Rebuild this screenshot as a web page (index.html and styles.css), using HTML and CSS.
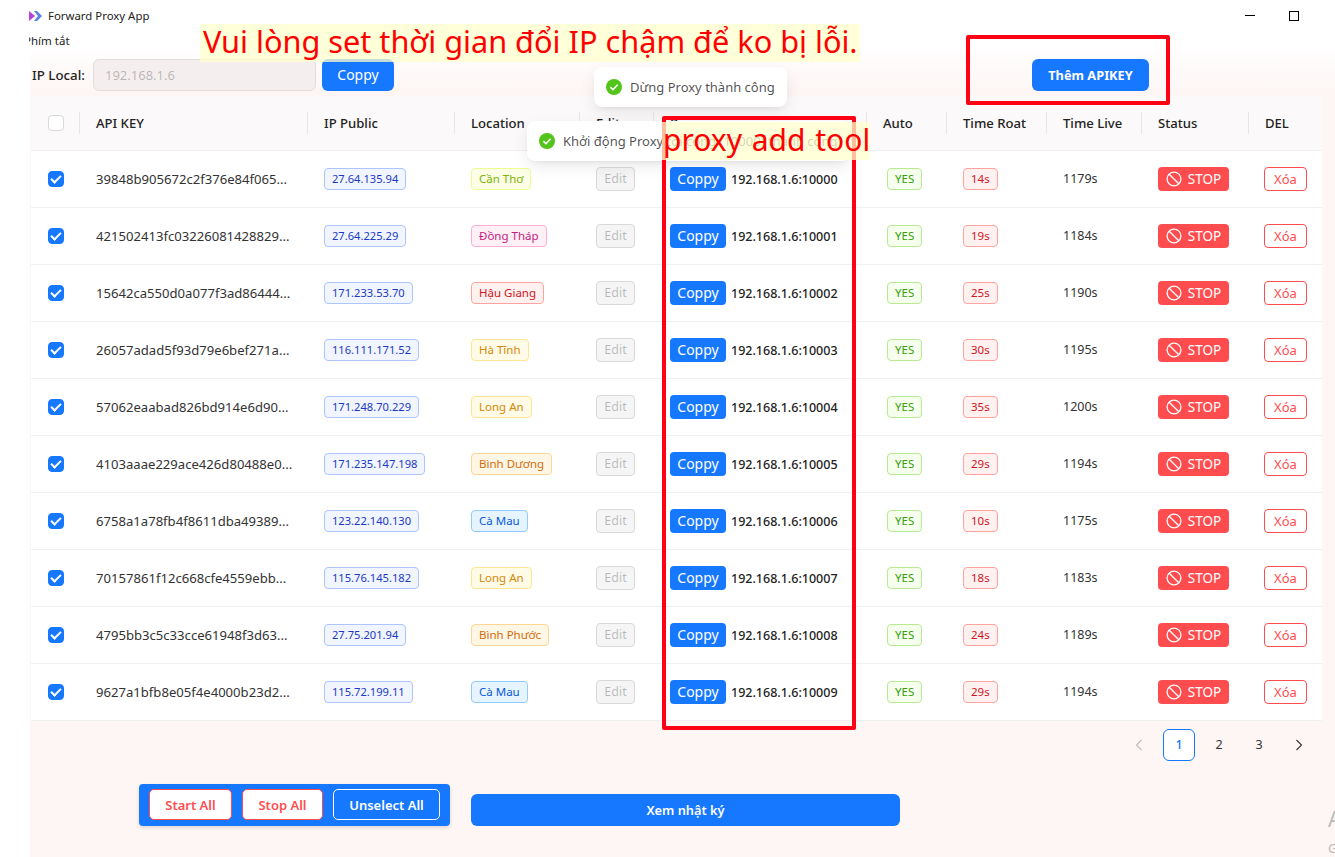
FILE: index.html
```html
<!DOCTYPE html>
<html lang="vi">
<head>
<meta charset="utf-8">
<title>Forward Proxy App</title>
<link rel="stylesheet" href="styles.css">
</head>
<body>
<svg class="defs" width="0" height="0" aria-hidden="true">
  <defs>
    <symbol id="stop" viewBox="0 0 16 16"><circle cx="8" cy="8" r="6.9" fill="none" stroke="currentColor" stroke-width="1.3"/><path d="M3.2 3.2l9.6 9.6" stroke="currentColor" stroke-width="1.3"/></symbol>
    <symbol id="ok" viewBox="0 0 16 16"><circle cx="8" cy="8" r="8" fill="#52c41a"/><path d="M4.4 8.2l2.6 2.5 4.6-5" fill="none" stroke="#fff" stroke-width="1.6"/></symbol>
  </defs>
</svg>
<header class="titlebar">
  <div class="title-row">
    <svg class="logo" width="14" height="10" viewBox="0 0 14 10"><path d="M0 0l6 5-6 5z" fill="#b63fe0"/><path d="M5 0l3 0 5 5-5 5-3 0 4-5z" fill="#5b7fe8"/></svg>
    <span class="app-name">Forward Proxy App</span>
    <div class="win-controls">
      <span class="win-min"></span>
      <span class="win-max"></span>
    </div>
  </div>
  <div class="menu-row"><span class="menu-item">Phím tắt</span></div>
</header>
<main class="main">
  <div class="toolbar">
    <label class="ip-label">IP Local:</label>
    <input class="ip-input" value="192.168.1.6" disabled>
    <button class="btn btn-primary btn-lg">Coppy</button>
    <button class="btn btn-primary btn-lg btn-add">Thêm APIKEY</button>
  </div>
  <table class="grid">
    <colgroup>
      <col class="c-check"><col class="c-key"><col class="c-ip"><col class="c-loc"><col class="c-edit"><col class="c-proxy"><col class="c-auto"><col class="c-roat"><col class="c-live"><col class="c-status"><col class="c-del">
    </colgroup>
    <thead>
      <tr><th class="cell-check"><span class="cb"></span></th><th>API KEY</th><th>IP Public</th><th>Location</th><th>Edit</th><th>Proxy</th><th>Auto</th><th>Time Roat</th><th>Time Live</th><th>Status</th><th class="last">DEL</th></tr>
    </thead>
    <tbody>
      <tr><td class="cell-check"><span class="cb on"></span></td><td class="key"><span>39848b905672c2f376e84f065...</span></td><td><span class="tag geek">27.64.135.94</span></td><td><span class="tag lime">Cần Thơ</span></td><td><button class="btn btn-edit">Edit</button></td><td class="proxy"><button class="btn btn-primary btn-copy">Coppy</button><b>192.168.1.6:10000</b></td><td><span class="tag green">YES</span></td><td><span class="tag red">14s</span></td><td>1179s</td><td><button class="btn btn-stop"><svg width="16" height="16"><use href="#stop"/></svg>STOP</button></td><td><button class="btn btn-del">Xóa</button></td></tr>
      <tr><td class="cell-check"><span class="cb on"></span></td><td class="key"><span>421502413fc03226081428829...</span></td><td><span class="tag geek">27.64.225.29</span></td><td><span class="tag magenta">Đồng Tháp</span></td><td><button class="btn btn-edit">Edit</button></td><td class="proxy"><button class="btn btn-primary btn-copy">Coppy</button><b>192.168.1.6:10001</b></td><td><span class="tag green">YES</span></td><td><span class="tag red">19s</span></td><td>1184s</td><td><button class="btn btn-stop"><svg width="16" height="16"><use href="#stop"/></svg>STOP</button></td><td><button class="btn btn-del">Xóa</button></td></tr>
      <tr><td class="cell-check"><span class="cb on"></span></td><td class="key"><span>15642ca550d0a077f3ad86444...</span></td><td><span class="tag geek">171.233.53.70</span></td><td><span class="tag red">Hậu Giang</span></td><td><button class="btn btn-edit">Edit</button></td><td class="proxy"><button class="btn btn-primary btn-copy">Coppy</button><b>192.168.1.6:10002</b></td><td><span class="tag green">YES</span></td><td><span class="tag red">25s</span></td><td>1190s</td><td><button class="btn btn-stop"><svg width="16" height="16"><use href="#stop"/></svg>STOP</button></td><td><button class="btn btn-del">Xóa</button></td></tr>
      <tr><td class="cell-check"><span class="cb on"></span></td><td class="key"><span>26057adad5f93d79e6bef271a...</span></td><td><span class="tag geek">116.111.171.52</span></td><td><span class="tag gold">Hà Tĩnh</span></td><td><button class="btn btn-edit">Edit</button></td><td class="proxy"><button class="btn btn-primary btn-copy">Coppy</button><b>192.168.1.6:10003</b></td><td><span class="tag green">YES</span></td><td><span class="tag red">30s</span></td><td>1195s</td><td><button class="btn btn-stop"><svg width="16" height="16"><use href="#stop"/></svg>STOP</button></td><td><button class="btn btn-del">Xóa</button></td></tr>
      <tr><td class="cell-check"><span class="cb on"></span></td><td class="key"><span>57062eaabad826bd914e6d90...</span></td><td><span class="tag geek">171.248.70.229</span></td><td><span class="tag gold">Long An</span></td><td><button class="btn btn-edit">Edit</button></td><td class="proxy"><button class="btn btn-primary btn-copy">Coppy</button><b>192.168.1.6:10004</b></td><td><span class="tag green">YES</span></td><td><span class="tag red">35s</span></td><td>1200s</td><td><button class="btn btn-stop"><svg width="16" height="16"><use href="#stop"/></svg>STOP</button></td><td><button class="btn btn-del">Xóa</button></td></tr>
      <tr><td class="cell-check"><span class="cb on"></span></td><td class="key"><span>4103aaae229ace426d80488e0...</span></td><td><span class="tag geek">171.235.147.198</span></td><td><span class="tag orange">Bình Dương</span></td><td><button class="btn btn-edit">Edit</button></td><td class="proxy"><button class="btn btn-primary btn-copy">Coppy</button><b>192.168.1.6:10005</b></td><td><span class="tag green">YES</span></td><td><span class="tag red">29s</span></td><td>1194s</td><td><button class="btn btn-stop"><svg width="16" height="16"><use href="#stop"/></svg>STOP</button></td><td><button class="btn btn-del">Xóa</button></td></tr>
      <tr><td class="cell-check"><span class="cb on"></span></td><td class="key"><span>6758a1a78fb4f8611dba49389...</span></td><td><span class="tag geek">123.22.140.130</span></td><td><span class="tag blue">Cà Mau</span></td><td><button class="btn btn-edit">Edit</button></td><td class="proxy"><button class="btn btn-primary btn-copy">Coppy</button><b>192.168.1.6:10006</b></td><td><span class="tag green">YES</span></td><td><span class="tag red">10s</span></td><td>1175s</td><td><button class="btn btn-stop"><svg width="16" height="16"><use href="#stop"/></svg>STOP</button></td><td><button class="btn btn-del">Xóa</button></td></tr>
      <tr><td class="cell-check"><span class="cb on"></span></td><td class="key"><span>70157861f12c668cfe4559ebb...</span></td><td><span class="tag geek">115.76.145.182</span></td><td><span class="tag gold">Long An</span></td><td><button class="btn btn-edit">Edit</button></td><td class="proxy"><button class="btn btn-primary btn-copy">Coppy</button><b>192.168.1.6:10007</b></td><td><span class="tag green">YES</span></td><td><span class="tag red">18s</span></td><td>1183s</td><td><button class="btn btn-stop"><svg width="16" height="16"><use href="#stop"/></svg>STOP</button></td><td><button class="btn btn-del">Xóa</button></td></tr>
      <tr><td class="cell-check"><span class="cb on"></span></td><td class="key"><span>4795bb3c5c33cce61948f3d63...</span></td><td><span class="tag geek">27.75.201.94</span></td><td><span class="tag orange">Bình Phước</span></td><td><button class="btn btn-edit">Edit</button></td><td class="proxy"><button class="btn btn-primary btn-copy">Coppy</button><b>192.168.1.6:10008</b></td><td><span class="tag green">YES</span></td><td><span class="tag red">24s</span></td><td>1189s</td><td><button class="btn btn-stop"><svg width="16" height="16"><use href="#stop"/></svg>STOP</button></td><td><button class="btn btn-del">Xóa</button></td></tr>
      <tr><td class="cell-check"><span class="cb on"></span></td><td class="key"><span>9627a1bfb8e05f4e4000b23d2...</span></td><td><span class="tag geek">115.72.199.11</span></td><td><span class="tag blue">Cà Mau</span></td><td><button class="btn btn-edit">Edit</button></td><td class="proxy"><button class="btn btn-primary btn-copy">Coppy</button><b>192.168.1.6:10009</b></td><td><span class="tag green">YES</span></td><td><span class="tag red">29s</span></td><td>1194s</td><td><button class="btn btn-stop"><svg width="16" height="16"><use href="#stop"/></svg>STOP</button></td><td><button class="btn btn-del">Xóa</button></td></tr>
    </tbody>
  </table>
  <nav class="pager">
    <span class="page muted"><svg width="10" height="12" viewBox="0 0 10 12"><path d="M7.5 1L2.5 6l5 5" fill="none" stroke="currentColor" stroke-width="1.1"/></svg></span>
    <span class="page current">1</span>
    <span class="page">2</span>
    <span class="page">3</span>
    <span class="page"><svg width="10" height="12" viewBox="0 0 10 12"><path d="M2.5 1l5 5-5 5" fill="none" stroke="currentColor" stroke-width="1.1"/></svg></span>
  </nav>
  <div class="actions">
    <div class="bulk">
      <button class="btn btn-bulk btn-start">Start All</button>
      <button class="btn btn-bulk btn-stopall">Stop All</button>
      <button class="btn btn-bulk btn-unselect">Unselect All</button>
    </div>
    <button class="btn btn-primary btn-log">Xem nhật ký</button>
  </div>
</main>

<div class="toast toast-stop"><svg width="16" height="16"><use href="#ok"/></svg>Dừng Proxy thành công</div>
<div class="toast toast-start"><svg width="16" height="16"><use href="#ok"/></svg>Khởi động Proxy tới cổng (10000) thành công</div>
<div class="frame frame-proxy"></div>
<div class="frame frame-add"></div>
<div class="note note-top">Vui lòng set thời gian đổi IP chậm để ko bị lỗi.</div>
<div class="note note-proxy">proxy add tool</div>
<div class="watermark">A<br><small>G</small></div>
</body>
</html>
```
FILE: styles.css
```css
* { box-sizing: border-box; }
html, body { margin: 0; padding: 0; }
body {
  position: relative;
  width: 1335px;
  height: 857px;
  overflow: hidden;
  background: #fff;
  font-family: "Noto Sans", "Open Sans", sans-serif;
  font-size: 13px;
  color: rgba(0, 0, 0, .85);
}
.defs { position: absolute; }

.titlebar { height: 52px; }
.title-row { display: flex; align-items: center; height: 31px; padding-left: 29px; }
.logo { margin-right: 5px; }
.app-name { font-size: 11.4px; color: #222; }
.win-controls { margin-left: auto; display: flex; align-items: center; gap: 34px; padding-right: 36px; }
.win-min { width: 10px; height: 1px; background: #000; }
.win-max { width: 10px; height: 10px; border: 1px solid #000; }
.menu-row { height: 19px; margin-left: 29px; overflow: hidden; display: flex; align-items: center; }
.menu-item { margin-left: -5px; font-size: 11.5px; color: #222; }

.main {
  margin-left: 30px;
  height: 805px;
  padding-left: 1px;
  background: linear-gradient(#fffdfd, #fdf6f5 40px);
}
.toolbar { display: flex; align-items: center; height: 44px; padding: 1px 0 0 1px; }
.ip-label { width: 61px; font-size: 13.3px; font-weight: 500; color: #222; }
.ip-input {
  width: 223px;
  height: 32px;
  padding: 0 11px;
  border: 1px solid #e2dcdc;
  border-radius: 6px;
  background: #f4eeee;
  color: rgba(0, 0, 0, .25);
  font: inherit;
}
.btn {
  display: inline-flex;
  align-items: center;
  justify-content: center;
  height: 24px;
  padding: 0;
  border: 1px solid transparent;
  border-radius: 4px;
  font: inherit;
  white-space: nowrap;
}
.btn-primary { background: #1677ff; color: #fff; }
.btn-lg { width: 72px; height: 32px; margin-left: 6px; border-radius: 6px; font-size: 14px; }
.btn-add { width: 117px; margin-left: 638px; font-size: 12.8px; font-weight: 700; }

.grid { width: 1291px; border-collapse: collapse; table-layout: fixed; background: #fff; }
.c-check { width: 49px; }
.c-key { width: 228px; }
.c-ip { width: 147px; }
.c-loc { width: 125px; }
.c-edit { width: 74px; }
.c-proxy { width: 213px; }
.c-auto { width: 80px; }
.c-roat { width: 100px; }
.c-live { width: 95px; }
.c-status { width: 107px; }
.c-del { width: 73px; }
.grid th {
  height: 54px;
  padding: 0 0 0 16px;
  background: #fbf9f9 linear-gradient(#e9e6e6, #e9e6e6) no-repeat right center / 1px 22px;
  border-bottom: 1px solid #f0f0f0;
  text-align: left;
  font-size: 13.1px;
  font-weight: 500;
  color: #222;
}
.grid th.last { background-image: none; }
.grid td {
  height: 57px;
  padding: 0 0 0 16px;
  border-bottom: 1px solid #f0f0f0;
  font-size: 12.5px;
  color: #333;
  white-space: nowrap;
  overflow: hidden;
}
.grid .cell-check { padding-left: 17px; }
.cb { display: flex; align-items: center; justify-content: center; width: 16px; height: 16px; border: 1px solid #d9d9d9; border-radius: 4px; background: #fff; }
.cb.on { background: #1677ff; border-color: #1677ff; }
.cb.on::after { content: ""; width: 4px; height: 8px; margin-top: -2px; border: solid #fff; border-width: 0 2px 2px 0; transform: rotate(45deg); }
.key span { font-size: 13.1px; }
.tag {
  display: inline-block;
  height: 22px;
  padding: 0 7px;
  border: 1px solid;
  border-radius: 4px;
  font-size: 11.5px;
  line-height: 20px;
}
.geek { background: #f0f5ff; border-color: #adc6ff; color: #1d39c4; font-size: 11.15px; }
.lime { background: #fcffe6; border-color: #eaff8f; color: #7cb305; }
.magenta { background: #fff0f6; border-color: #ffadd2; color: #c41d7f; }
.red { background: #fff1f0; border-color: #ffa39e; color: #cf1322; }
.gold { background: #fffbe6; border-color: #ffe58f; color: #d48806; }
.orange { background: #fff7e6; border-color: #ffd591; color: #d46b08; }
.blue { background: #e6f4ff; border-color: #91caff; color: #0958d9; }
.green { background: #f6ffed; border-color: #b7eb8f; color: #389e0d; margin-left: 4px; }
.btn-edit { width: 39px; background: #f5f5f5; border-color: #d9d9d9; color: rgba(0, 0, 0, .25); font-size: 12.5px; }
.btn-copy { width: 56px; font-size: 14px; border-radius: 4px; }
.proxy { font-size: 12.5px; }
.proxy b { margin-left: 5px; font-weight: 500; color: #222; }
.btn-stop { width: 71px; gap: 6px; background: #ff4d4f; color: #fff; font-size: 13.5px; }
.btn-del { width: 43px; margin-left: -1px; background: #fff; border-color: #ff4d4f; color: #ff4d4f; font-size: 13px; }

.pager { display: flex; justify-content: flex-end; gap: 8px; width: 1291px; padding: 8px 7px 0 0; }
.page { display: flex; align-items: center; justify-content: center; width: 32px; height: 32px; border: 1px solid transparent; border-radius: 6px; font-size: 12.5px; color: #333; }
.page.muted { color: #bbb; }
.page.current { border-color: #1677ff; background: #fff; color: #1677ff; font-weight: 500; }

.actions { display: flex; align-items: flex-end; margin: 23px 0 0 108px; }
.bulk { display: flex; align-items: center; gap: 10px; height: 42px; padding: 0 10px; background: #1677ff; border-radius: 4px; box-shadow: 0 2px 4px rgba(0, 0, 0, .12); }
.btn-bulk { height: 31px; font-size: 13px; font-weight: 600; border-radius: 5px; }
.btn-start { width: 83px; background: #fff; border-color: #ff4d4f; color: #ff4d4f; }
.btn-stopall { width: 81px; background: #fff; border-color: #ff4d4f; color: #ff4d4f; }
.btn-unselect { width: 107px; background: #1677ff; border-color: #fff; color: #fff; }
.btn-log { width: 429px; height: 32px; margin-left: 21px; border-radius: 6px; font-size: 12.8px; font-weight: 600; }

.toast {
  position: absolute;
  display: flex;
  align-items: center;
  gap: 8px;
  height: 40px;
  padding: 0 12px;
  background: #fff;
  border-radius: 8px;
  box-shadow: 0 6px 16px rgba(0, 0, 0, .08), 0 3px 6px -4px rgba(0, 0, 0, .12);
  font-size: 13px;
  color: rgba(0, 0, 0, .7);
}
.toast-stop { left: 594px; top: 67px; }
.toast-start { left: 527px; top: 121px; }
.note {
  position: absolute;
  background: rgba(255, 255, 205, .75);
  color: #ff0000;
  font-family: "Noto Sans", sans-serif;
  white-space: nowrap;
}
.note-top { left: 200px; top: 24px; width: 660px; height: 38px; padding-left: 3px; font-size: 30.7px; line-height: 35px; }
.note-proxy { left: 662px; top: 122px; width: 208px; height: 38px; padding-left: 1px; font-size: 30px; line-height: 36px; word-spacing: 2px; }
.frame { position: absolute; border: 4px solid #ff0014; border-radius: 2px; }
.frame-proxy { left: 662px; top: 116px; width: 194px; height: 614px; }
.frame-add { left: 966px; top: 35px; width: 204px; height: 70px; }
.watermark { position: absolute; left: 1328px; top: 806px; font-size: 21px; line-height: 26px; color: #bbb; }
.watermark small { font-size: 13px; }
```
